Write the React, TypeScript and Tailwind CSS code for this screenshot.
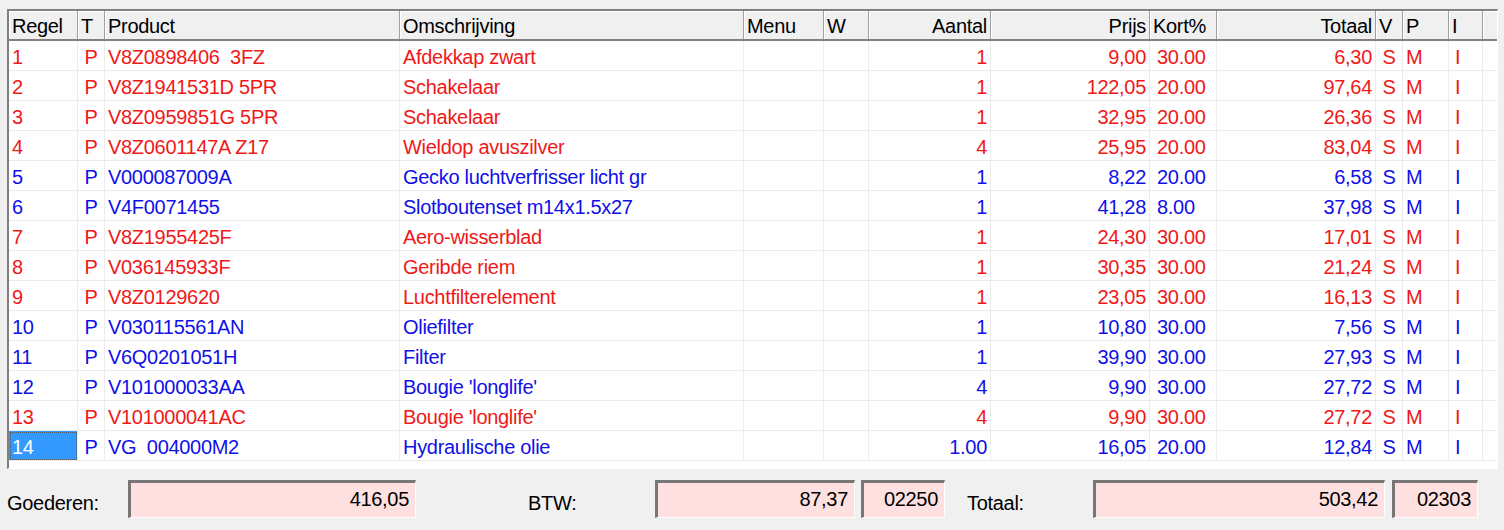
const cols = "grid-cols-[69px_27px_295px_344px_80px_45px_122px_159px_67px_159px_27px_46px_34px_1fr]";
const rows: any[] = [
  ["1","V8Z0898406  3FZ","Afdekkap zwart","1","9,00","30.00","6,30",false],
  ["2","V8Z1941531D 5PR","Schakelaar","1","122,05","20.00","97,64",false],
  ["3","V8Z0959851G 5PR","Schakelaar","1","32,95","20.00","26,36",false],
  ["4","V8Z0601147A Z17","Wieldop avuszilver","4","25,95","20.00","83,04",false],
  ["5","V000087009A","Gecko luchtverfrisser licht gr","1","8,22","20.00","6,58",true],
  ["6","V4F0071455","Slotboutenset m14x1.5x27","1","41,28","8.00","37,98",true],
  ["7","V8Z1955425F","Aero-wisserblad","1","24,30","30.00","17,01",false],
  ["8","V036145933F","Geribde riem","1","30,35","30.00","21,24",false],
  ["9","V8Z0129620","Luchtfilterelement","1","23,05","30.00","16,13",false],
  ["10","V030115561AN","Oliefilter","1","10,80","30.00","7,56",true],
  ["11","V6Q0201051H","Filter","1","39,90","30.00","27,93",true],
  ["12","V101000033AA","Bougie 'longlife'","4","9,90","30.00","27,72",true],
  ["13","V101000041AC","Bougie 'longlife'","4","9,90","30.00","27,72",false],
  ["14","VG  004000M2","Hydraulische olie","1.00","16,05","20.00","12,84",true],
];

const cell = "border-r border-b border-[#ececec] px-[3px] whitespace-pre overflow-hidden";
const hcell = "border-r border-[#a0a0a0] px-[3px] whitespace-nowrap overflow-hidden bg-[#f0f0f0] shadow-[inset_1px_1px_0_#fff]";

function Box({ v, w }: { v: string; w: string }) {
  return (
    <div className={`${w} h-[38px] bg-[#ffe0e0] border-t-[3px] border-l-[3px] border-[#777] border-r border-b border-r-[#fff] border-b-[#fff] text-right pr-[6px] leading-[32px]`}>{v}</div>
  );
}

export default function App() {
  return (
    <div className="w-[1504px] h-[530px] bg-[#f0f0f0] text-[20px] tracking-[-0.3px] text-black" style={{ fontFamily: '"Liberation Sans", Arial, sans-serif' }}>
      <div className="pt-[9px] pl-[7px] pr-[6px]">
        <div className="h-[460px] border-t-[2px] border-l-[2px] border-[#808080] border-r border-b border-r-[#fff] border-b-[#fff] bg-white overflow-hidden">
          <div className={`grid ${cols} h-[30px] leading-[30px] border-b-[2px] border-[#808080]`}>
            {["Regel","T","Product","Omschrijving","Menu","W","Aantal","Prijs","Kort%","Totaal","V","P","I",""].map((h, i) => (
              <div key={i} className={`${hcell} ${[6,7,9].includes(i) ? "text-right" : ""} ${i===13?"border-r-0":""}`}>{h}</div>
            ))}
          </div>
          {rows.map((r, i) => {
            const c = r[7] ? "text-[#1010e8]" : "text-[#f01818]";
            return (
              <div key={i} className={`grid ${cols} h-[30px] leading-[32px] ${c}`}>
                <div className={`${cell} ${i===13 ? "bg-[#3399ff] text-white outline-1 outline-dotted outline-[#555] -outline-offset-2" : ""}`}>{r[0]}</div>
                <div className={`${cell} text-center`}>P</div>
                <div className={cell}>{r[1]}</div>
                <div className={cell}>{r[2]}</div>
                <div className={cell}></div>
                <div className={cell}></div>
                <div className={`${cell} text-right`}>{r[3]}</div>
                <div className={`${cell} text-right`}>{r[4]}</div>
                <div className={`${cell} pl-[7px]`}>{r[5]}</div>
                <div className={`${cell} text-right`}>{r[6]}</div>
                <div className={`${cell} text-center`}>S</div>
                <div className={`${cell}`}>M</div>
                <div className={`${cell} pl-[6px]`}>I</div>
                <div className="border-b border-[#ececec]"></div>
              </div>
            );
          })}
        </div>
      </div>
      <div className="flex items-center pt-[11px] pl-[7px]">
        <div className="w-[121px] pt-[8px]">Goederen:</div>
        <Box v="416,05" w="w-[288px]" />
        <div className="w-[239px] pl-[112px] pt-[8px]">BTW:</div>
        <Box v="87,37" w="w-[200px]" />
        <div className="w-[6px]" />
        <Box v="02250" w="w-[84px]" />
        <div className="w-[148px] pl-[22px] pt-[8px]">Totaal:</div>
        <Box v="503,42" w="w-[292px]" />
        <div className="w-[7px]" />
        <Box v="02303" w="w-[86px]" />
      </div>
    </div>
  );
}
